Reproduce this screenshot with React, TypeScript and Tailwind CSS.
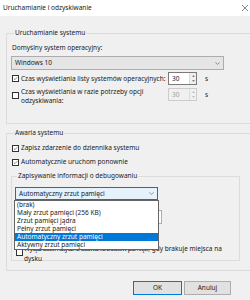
import React from 'react';

function Check({ checked }: { checked?: boolean }) {
  return (
    <span className="w-[7px] h-[7px] border border-[#333333] bg-white flex items-center justify-center shrink-0">
      {checked && (
        <svg viewBox="0 0 7 7" className="w-[7px] h-[7px]">
          <path d="M1.2 3.6 L2.8 5.1 L5.9 1.7" stroke="#333333" strokeWidth="0.8" fill="none" />
        </svg>
      )}
    </span>
  );
}

function Chevron() {
  return (
    <svg viewBox="0 0 8 5" className="w-[5px] h-[3px]">
      <path d="M0.5 0.5 L4 4 L7.5 0.5" stroke="#555555" strokeWidth="1" fill="none" />
    </svg>
  );
}

function Spin({ disabled }: { disabled?: boolean }) {
  const fill = disabled ? '#b0b0b0' : '#606060';
  return (
    <div className="flex items-center">
      <div
        className={
          disabled
            ? 'w-[29px] h-[13px] border border-[#cccccc] bg-[#f0f0f0] flex'
            : 'w-[29px] h-[13px] border border-[#7a7a7a] bg-white flex'
        }
      >
        <span className={disabled ? 'flex-1 pl-[3px] leading-[11px] text-[#a0a0a0]' : 'flex-1 pl-[3px] leading-[11px]'}>30</span>
        <span className="w-[7px] flex flex-col bg-[#f0f0f0] border-l border-[#dcdcdc]">
          <span className="flex-1 flex items-center justify-center">
            <svg viewBox="0 0 4 2" className="w-[3px] h-[2px]">
              <path d="M0 2 L2 0 L4 2 Z" fill={fill} />
            </svg>
          </span>
          <span className="flex-1 flex items-center justify-center">
            <svg viewBox="0 0 4 2" className="w-[3px] h-[2px]">
              <path d="M0 0 L2 2 L4 0 Z" fill={fill} />
            </svg>
          </span>
        </span>
      </div>
      <span className="ml-[8px]">s</span>
    </div>
  );
}

export default function App() {
  const options = [
    '(brak)',
    'Mały zrzut pamięci (256 KB)',
    'Zrzut pamięci jądra',
    'Pełny zrzut pamięci',
    'Automatyczny zrzut pamięci',
    'Aktywny zrzut pamięci',
  ];

  return (
    <div
      className="w-[250px] h-[300px] overflow-hidden bg-[#f0f0f0] text-[#1a1a1a] text-[6.5px] leading-[10px] whitespace-nowrap"
      style={{ fontFamily: '"Noto Sans", "Liberation Sans", sans-serif' }}
    >
      {/* Title bar */}
      <div className="h-[16px] bg-white flex items-center justify-between pl-[3px] pr-[2px]">
        <span>Uruchamianie i odzyskiwanie</span>
        <svg viewBox="0 0 6 6" className="w-[6px] h-[6px]">
          <path d="M0 0 L6 6 M6 0 L0 6" stroke="#333333" strokeWidth="0.6" />
        </svg>
      </div>

      <div className="w-[262px] pl-[6px] pt-[12px]">
        {/* Uruchamianie systemu */}
        <fieldset className="w-[250px] border border-[#dcdcdc] h-[96px] pl-[4px]">
          <legend className="ml-[3px] px-[1px]">Uruchamianie systemu</legend>
          <div className="mt-[5px] ml-[1px]">Domyślny system operacyjny:</div>
          <div className="mt-[3px] w-[213px] h-[14px] border border-[#adadad] bg-[#e5e5e5] flex items-center justify-between pl-[3px] pr-[3px]">
            <span>Windows 10</span>
            <Chevron />
          </div>
          <div className="mt-[2px] h-[13px] flex items-center pl-[1px]">
            <Check checked />
            <span className="ml-[2px] w-[147px]">Czas wyświetlania listy systemów operacyjnych:</span>
            <Spin />
          </div>
          <div className="mt-[2px] flex items-start pl-[1px]">
            <span className="mt-[5px]">
              <Check />
            </span>
            <span className="ml-[2px] w-[147px] leading-[9px]">
              Czas wyświetlania w razie potrzeby opcji
              <br />
              odzyskiwania:
            </span>
            <span className="mt-[1px]">
              <Spin disabled />
            </span>
          </div>
        </fieldset>

        {/* Awaria systemu */}
        <fieldset className="mt-[4px] w-[250px] border border-[#dcdcdc] h-[143px] pl-[4px]">
          <legend className="ml-[3px] px-[1px]">Awaria systemu</legend>
          <div className="mt-[5px] flex items-center pl-[1px]">
            <Check checked />
            <span className="ml-[2px]">Zapisz zdarzenie do dziennika systemu</span>
          </div>
          <div className="mt-[4px] flex items-center pl-[1px]">
            <Check checked />
            <span className="ml-[2px]">Automatycznie uruchom ponownie</span>
          </div>

          {/* Zapisywanie informacji o debugowaniu */}
          <fieldset className="mt-[4px] w-[229px] border border-[#dcdcdc] h-[90px] pl-[3px]">
            <legend className="ml-[2px] px-[1px]">Zapisywanie informacji o debugowaniu</legend>
            <div className="relative mt-[6px] w-[143px]">
              <div className="h-[13px] border border-[#0078d7] bg-[#e5f1fb] flex items-center justify-between pl-[3px] pr-[3px]">
                <span>Automatyczny zrzut pamięci</span>
                <Chevron />
              </div>
              {/* Dropdown list */}
              <div className="absolute left-[-1px] top-[13px] w-[145px] border border-[#646464] bg-white z-10">
                {options.map((o, i) => (
                  <div
                    key={i}
                    className={
                      i === 4
                        ? 'h-[8px] leading-[8px] pl-[2px] bg-[#0078d7] text-white'
                        : 'h-[8px] leading-[8px] pl-[2px]'
                    }
                  >
                    {o}
                  </div>
                ))}
              </div>
            </div>
            {/* textbox hidden under the open list */}
            <div className="mt-[10px] w-[147px] h-[14px] border border-[#adadad] bg-white" />
            <div className="mt-[20px] flex items-start pl-[1px]">
              <span className="mt-[5px]">
                <Check />
              </span>
              <span className="ml-[1px] leading-[10px]">
                <span className="tracking-[-0.55px]">Wyłącz automatyczne usuwanie zrzutów pamięc</span>
                i, gdy brakuje miejsca na
                <br />
                dysku
              </span>
            </div>
          </fieldset>
        </fieldset>
      </div>

      {/* Buttons */}
      <div className="mt-[10px] flex justify-end gap-[2px] pr-[19px]">
        <button className="w-[49px] h-[14px] border border-[#0078d7] bg-[#e1e1e1] text-[6.5px] leading-[12px]">
          OK
        </button>
        <button className="w-[47px] h-[14px] border border-[#adadad] bg-[#e1e1e1] text-[6.5px] leading-[12px]">
          Anuluj
        </button>
      </div>
    </div>
  );
}
